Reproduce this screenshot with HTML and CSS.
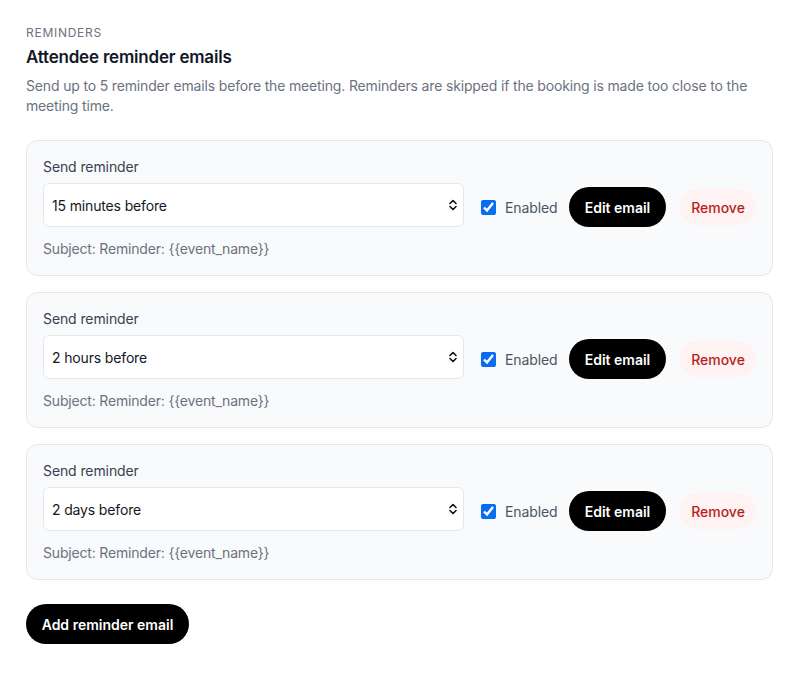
FILE: index.html
```html
<!DOCTYPE html>
<html lang="en">
<head>
  <meta charset="UTF-8" />
  <meta name="viewport" content="width=device-width, initial-scale=1" />
  <title>Reminders</title>
  <link rel="stylesheet" href="styles.css">
</head>
<body>
<div class="page">
  <div class="eyebrow">REMINDERS</div>
  <h1 class="title">Attendee reminder emails</h1>
  <p class="desc">Send up to 5 reminder emails before the meeting. Reminders are skipped if the booking is made too close to the meeting time.</p>

  <div class="list">
    <div class="card">
      <label class="field-label">Send reminder</label>
      <div class="row">
        <div class="select-wrap">
          <select class="select">
            <option selected>15 minutes before</option>
            <option>2 hours before</option>
            <option>2 days before</option>
          </select>
          <svg class="chev" width="10" height="14" viewBox="0 0 10 14"><path d="M2 5.5 5 2.5 8 5.5M2 8.5 5 11.5 8 8.5" fill="none" stroke="#111" stroke-width="1.6" stroke-linecap="round" stroke-linejoin="round"/></svg>
        </div>
        <label class="check"><input type="checkbox" checked> Enabled</label>
        <button class="btn btn-dark">Edit email</button>
        <button class="btn btn-remove">Remove</button>
      </div>
      <div class="subject">Subject: Reminder: {{event_name}}</div>
    </div>

    <div class="card">
      <label class="field-label">Send reminder</label>
      <div class="row">
        <div class="select-wrap">
          <select class="select">
            <option>15 minutes before</option>
            <option selected>2 hours before</option>
            <option>2 days before</option>
          </select>
          <svg class="chev" width="10" height="14" viewBox="0 0 10 14"><path d="M2 5.5 5 2.5 8 5.5M2 8.5 5 11.5 8 8.5" fill="none" stroke="#111" stroke-width="1.6" stroke-linecap="round" stroke-linejoin="round"/></svg>
        </div>
        <label class="check"><input type="checkbox" checked> Enabled</label>
        <button class="btn btn-dark">Edit email</button>
        <button class="btn btn-remove">Remove</button>
      </div>
      <div class="subject">Subject: Reminder: {{event_name}}</div>
    </div>

    <div class="card">
      <label class="field-label">Send reminder</label>
      <div class="row">
        <div class="select-wrap">
          <select class="select">
            <option>15 minutes before</option>
            <option>2 hours before</option>
            <option selected>2 days before</option>
          </select>
          <svg class="chev" width="10" height="14" viewBox="0 0 10 14"><path d="M2 5.5 5 2.5 8 5.5M2 8.5 5 11.5 8 8.5" fill="none" stroke="#111" stroke-width="1.6" stroke-linecap="round" stroke-linejoin="round"/></svg>
        </div>
        <label class="check"><input type="checkbox" checked> Enabled</label>
        <button class="btn btn-dark">Edit email</button>
        <button class="btn btn-remove">Remove</button>
      </div>
      <div class="subject">Subject: Reminder: {{event_name}}</div>
    </div>
  </div>

  <button class="btn btn-dark btn-add">Add reminder email</button>
</div>
</body>
</html>
```

FILE: styles.css
```css
body {
  margin: 0;
  font-family: Inter, "Noto Sans", sans-serif;
  background: #fff;
  color: #111827;
}
.page {
  padding: 25px 27px 24px 26px;
}
.eyebrow {
  font-size: 12px;
  line-height: 16px;
  letter-spacing: 0.06em;
  color: #6b7280;
}
.title {
  margin: 2px 0 0;
  font-size: 17px;
  line-height: 28px;
  font-weight: 600;
  letter-spacing: -0.2px;
  color: #111827;
}
.desc {
  margin: 5px 0 0;
  font-size: 14px;
  line-height: 19.5px;
  letter-spacing: -0.16px;
  color: #6b7280;
}
.list {
  margin-top: 25px;
  display: flex;
  flex-direction: column;
  gap: 16px;
}
.card {
  background: #f9fafb;
  border: 1px solid #e5e7eb;
  border-radius: 12px;
  padding: 16px 16px 16px;
}
.field-label {
  display: block;
  font-size: 14px;
  line-height: 20px;
  letter-spacing: -0.1px;
  color: #374151;
}
.row {
  margin-top: 6px;
  display: flex;
  align-items: center;
}
.select-wrap {
  position: relative;
  flex: 0 0 421px;
  margin-bottom: 4px;
}
.select {
  appearance: none;
  -webkit-appearance: none;
  display: block;
  width: 100%;
  height: 44px;
  padding: 0 30px 0 8px;
  font-family: inherit;
  font-size: 14px;
  letter-spacing: -0.15px;
  color: #111827;
  background: #fff;
  border: 1px solid #e5e7eb;
  border-radius: 6px;
}
.chev {
  position: absolute;
  right: 6px;
  top: 15px;
  pointer-events: none;
}
.check {
  display: flex;
  align-items: center;
  gap: 9px;
  margin-left: 17px;
  font-size: 14px;
  letter-spacing: -0.1px;
  color: #4b5563;
}
.check input {
  margin: 0;
  width: 15px;
  height: 15px;
  accent-color: #0b6cf2;
}
.btn {
  font-family: inherit;
  font-size: 14px;
  border: none;
  border-radius: 999px;
  cursor: pointer;
}
.btn-dark {
  background: #000;
  color: #fff;
  font-weight: 600;
  height: 40px;
  padding: 0 16px;
}
.row .btn-dark {
  margin-left: auto;
  width: 97px;
  padding: 0;
}
.btn-remove {
  margin-left: 14px;
  width: 76px;
  height: 36px;
  padding: 0;
  background: #fef2f2;
  color: #b91c1c;
  font-weight: 500;
}
.subject {
  margin-top: 8px;
  font-size: 14px;
  line-height: 20px;
  letter-spacing: -0.18px;
  color: #6b7280;
}
.btn-add {
  margin-top: 24px;
  width: 163px;
  padding: 0;
}
```
